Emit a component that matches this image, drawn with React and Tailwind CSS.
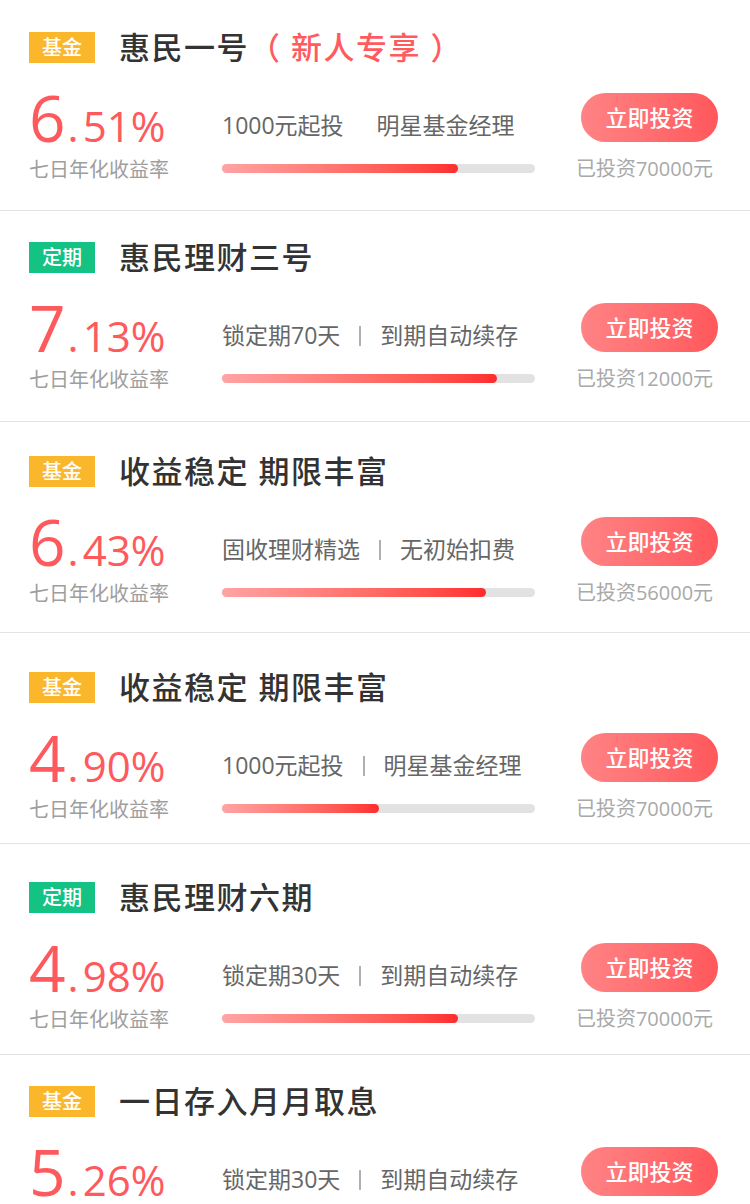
import React from 'react';

const products = [
  { tag: '基金', tagClass: 'bg-[#fbb72c]', title: '惠民一号', extra: '（ 新人专享 ）', int: '6', dec: '51%', a: '1000元起投', b: '明星基金经理', sep: false, progress: 75.4, invested: '70000', pad: 'pt-[32px]' },
  { tag: '定期', tagClass: 'bg-[#14c284]', title: '惠民理财三号', int: '7', dec: '13%', a: '锁定期70天', b: '到期自动续存', sep: true, progress: 87.9, invested: '12000', pad: 'pt-[31px]' },
  { tag: '基金', tagClass: 'bg-[#fbb72c]', title: '收益稳定 期限丰富', int: '6', dec: '43%', a: '固收理财精选', b: '无初始扣费', sep: true, progress: 84.3, invested: '56000', pad: 'pt-[34px]' },
  { tag: '基金', tagClass: 'bg-[#fbb72c]', title: '收益稳定 期限丰富', int: '4', dec: '90%', a: '1000元起投', b: '明星基金经理', sep: true, progress: 50.2, invested: '70000', pad: 'pt-[39px]' },
  { tag: '定期', tagClass: 'bg-[#14c284]', title: '惠民理财六期', int: '4', dec: '98%', a: '锁定期30天', b: '到期自动续存', sep: true, progress: 75.3, invested: '70000', pad: 'pt-[38px]' },
  { tag: '基金', tagClass: 'bg-[#fbb72c]', title: '一日存入月月取息', int: '5', dec: '26%', a: '锁定期30天', b: '到期自动续存', sep: true, progress: 75, invested: '70000', pad: 'pt-[31px]' },
];

function ProductCard({ p }) {
  return (
    <div className={`h-[211px] shrink-0 border-b border-[#e3e3e3] px-[29px] ${p.pad}`}>
      {/* header */}
      <div className="flex h-[31px] items-center">
        <span className={`flex h-[31px] w-[66px] items-center justify-center text-[20px] font-medium text-white ${p.tagClass}`}>
          {p.tag}
        </span>
        <h3 className="ml-[24px] whitespace-pre text-[31px] font-medium leading-none tracking-[1.5px] text-[#333]">
          {p.title}
          {p.extra && <span className="text-[#ff5b5f]">{p.extra}</span>}
        </h3>
      </div>

      <div className="flex">
        {/* rate */}
        <div className="w-[193px]">
          <p className="mt-[23px] whitespace-nowrap font-['Open_Sans'] text-[64px] leading-none text-[#fe5a5e]">
            {p.int}
            <span className="ml-[2px] mr-[4px] text-[42px] leading-none">.</span>
            <span className="text-[42px] leading-none">{p.dec}</span>
          </p>
          <p className="mt-[10px] text-[20px] leading-[20px] text-[#9e9e9e]">七日年化收益率</p>
        </div>

        {/* info + progress */}
        <div className="w-[313px]">
          <div className="mt-[51px] flex h-[23px] items-center whitespace-nowrap text-[23px] text-[#666]">
            <span>{p.a}</span>
            {p.sep ? (
              <span className="mx-[19px] block h-[20px] w-[2px] shrink-0 bg-[#b0b0b0]"></span>
            ) : (
              <span className="w-[33px]"></span>
            )}
            <span>{p.b}</span>
          </div>
          <div className="mt-[27px] h-[9px] w-full rounded-full bg-[#e2e2e2]">
            <div
              className="h-full rounded-full bg-gradient-to-r from-[#ffa3a4] to-[#ff2b2d]"
              style={{ width: `${p.progress}%` }}
            ></div>
          </div>
        </div>

        {/* action */}
        <div className="ml-[46px] flex w-[137px] flex-col items-center">
          <button className="mt-[30px] h-[49px] w-[137px] rounded-full bg-gradient-to-r from-[#ff8385] to-[#ff575c] text-[22px] font-medium text-white">
            立即投资
          </button>
          <p className="mr-[10px] mt-[17px] whitespace-nowrap text-[20px] leading-[20px] text-[#a9a9a9]">
            已投资{p.invested}元
          </p>
        </div>
      </div>
    </div>
  );
}

export default function App() {
  return (
    <div className="h-[1204px] w-[750px] overflow-hidden bg-white font-['Open_Sans','Noto_Sans_CJK_SC',sans-serif]">
      {products.map((p, i) => (
        <ProductCard key={i} p={p} />
      ))}
    </div>
  );
}
